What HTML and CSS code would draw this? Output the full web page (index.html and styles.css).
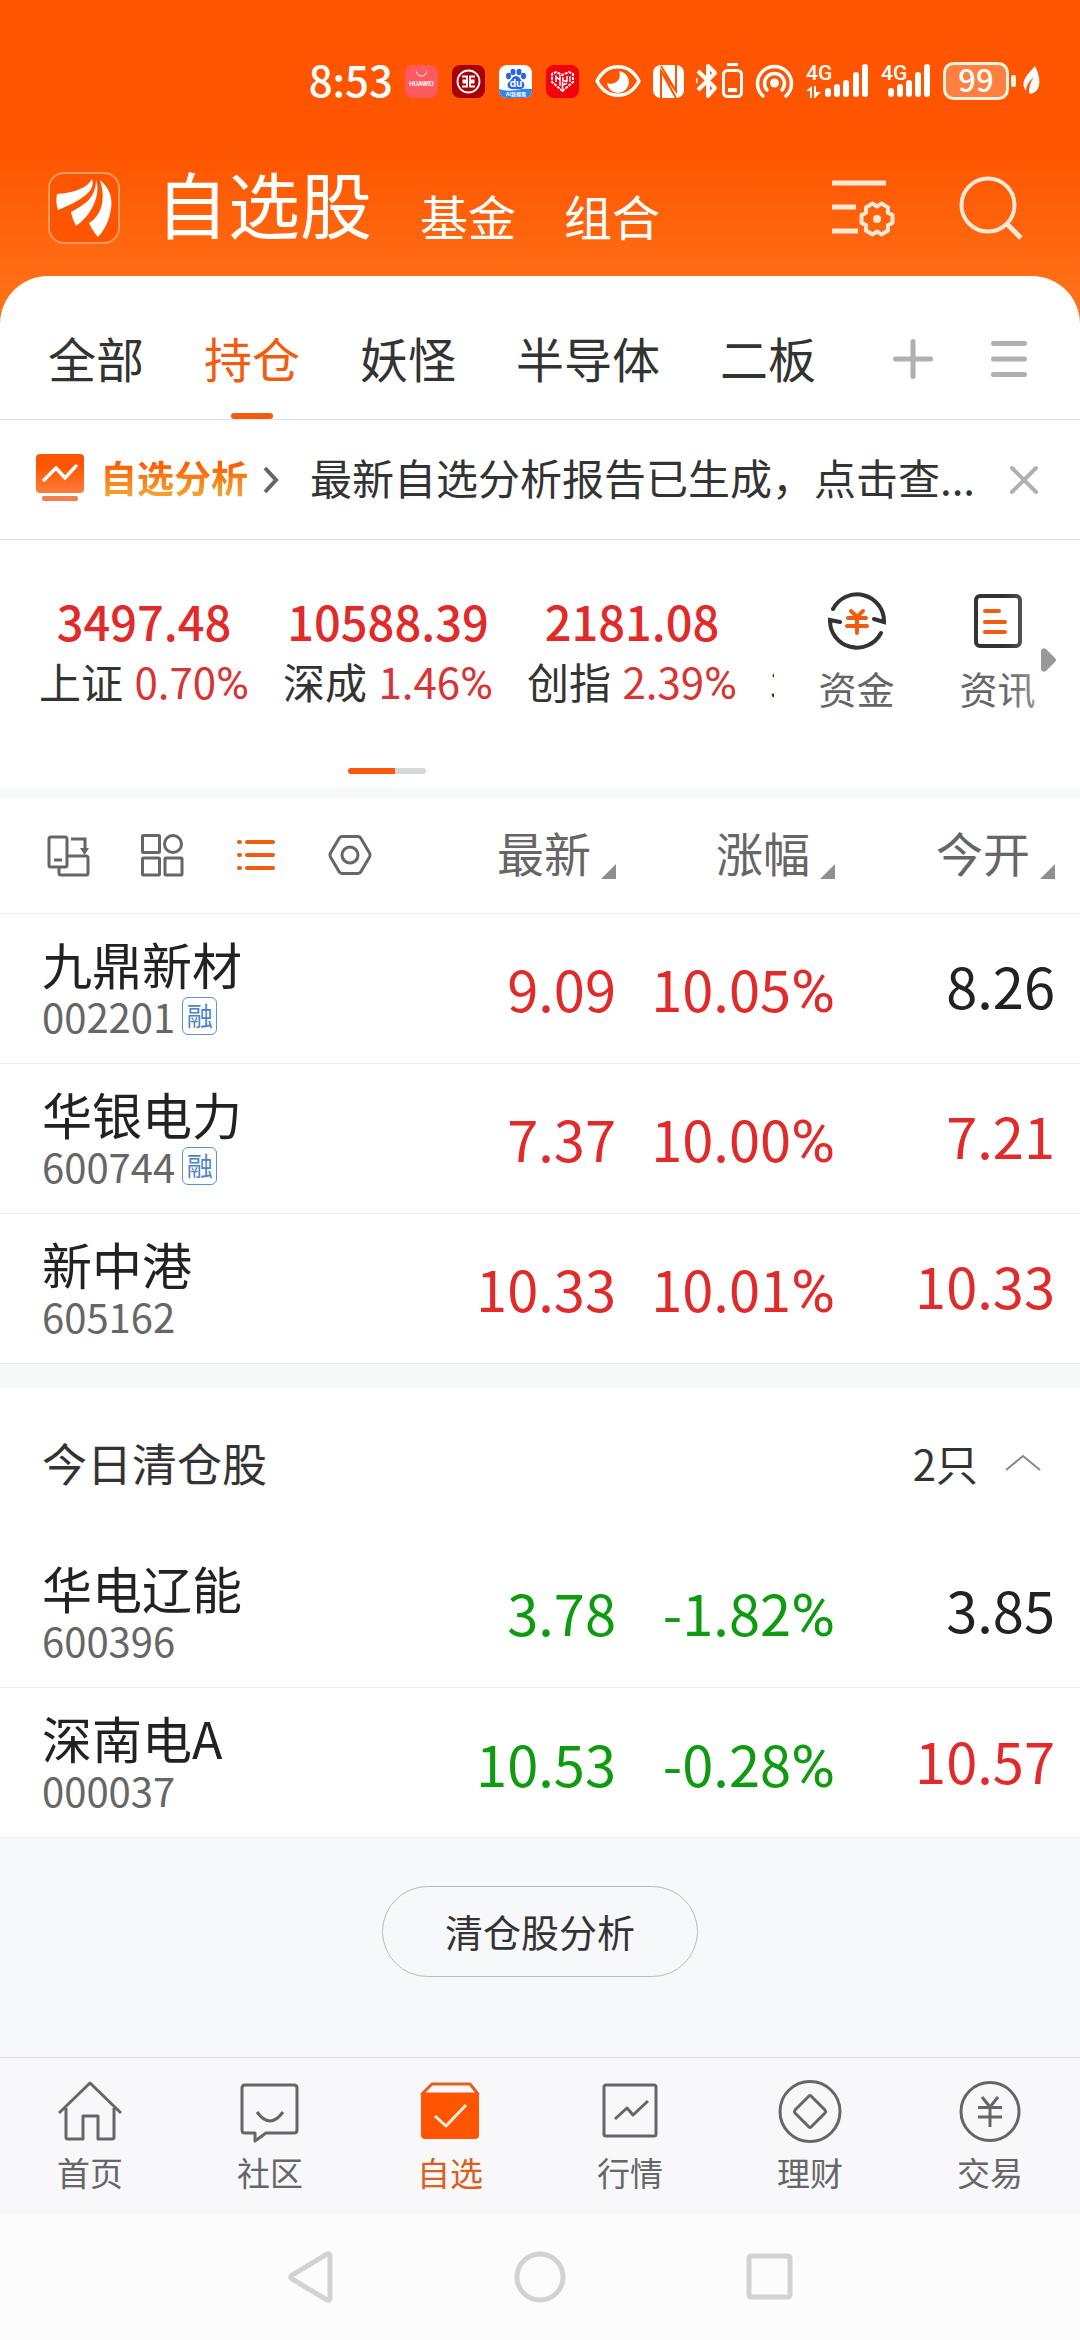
FILE: index.html
```html
<!DOCTYPE html>
<html lang="zh-CN">
<head>
<meta charset="utf-8">
<meta name="viewport" content="width=device-width">
<title>自选股</title>
<link rel="stylesheet" href="styles.css">
</head>
<body>
<div class="page">
  <div class="top">
    <div class="status">
      <span class="time">8:53</span>
      <div class="apps">
        <svg width="33" height="33" viewBox="0 0 33 33"><rect width="33" height="33" rx="8" fill="#ff5a5f"/><path d="M11.500 6.500a5 4.500 0 0 0 10 0" fill="none" stroke="#fff" stroke-width="1"/><text x="16.500" y="21" text-anchor="middle" class="t-huawei">HUAWEI</text></svg>
        <svg width="33" height="33" viewBox="0 0 33 33"><rect width="33" height="33" rx="8" fill="#a90008"/><g fill="none" stroke="#fff" stroke-width="1.800"><circle cx="16.500" cy="16.500" r="11"/><path d="M10 11.500h5v4h-4.500M10 21.500h5v-4h-4.500M23 11.500h-5v4h4.500M23 21.500h-5v-4h4.500"/></g></svg>
        <svg width="33" height="33" viewBox="0 0 33 33"><clipPath id="app-clip"><rect width="33" height="33" rx="8"/></clipPath><g clip-path="url(#app-clip)"><rect width="33" height="33" fill="#fff"/><path d="M0 24q8 3 17 1t16-1v9H0z" fill="#2f86f0"/><g fill="#2a62e8"><ellipse cx="9.500" cy="11" rx="2.500" ry="3.200"/><ellipse cx="14" cy="7" rx="2.500" ry="3.200"/><ellipse cx="20" cy="7" rx="2.500" ry="3.200"/><ellipse cx="24.500" cy="11" rx="2.500" ry="3.200"/><path d="M17 11c4 0 4 4 7 6 3 3 1 7-3 7h-8c-4 0-6-4-3-7 3-2 3-6 7-6z"/></g></g><text x="17" y="22" text-anchor="middle" class="t-du">du</text><text x="17" y="31" text-anchor="middle" class="t-ai">AI新搜索</text></svg>
        <svg width="33" height="33" viewBox="0 0 33 33"><rect width="33" height="33" rx="8" fill="#f5000c"/><path d="M16.500 26L6 17V9l4-2 6.500 3L23 7l4 2v8z" fill="none" stroke="#fff" stroke-width="2" stroke-dasharray="3 1"/><path d="M10 10v7M10 12l4 3M14 10v11M17 12v4h4v-5M24 11v6M17 20l4-2M16.500 17v7" fill="none" stroke="#fff" stroke-width="1.500"/></svg>
      </div>
      <svg width="46" height="38" viewBox="0 0 46 38"><path d="M2 19C12 0 34 0 44 19 34 38 12 38 2 19z" fill="none" stroke="#fff" stroke-width="3.500" stroke-linejoin="round"/><path d="M24 9a11 11 0 1 1-12 12c4 2 10 0 12-4 1-3 1-5 0-8z" fill="#fff"/></svg>
      <svg width="31" height="33" viewBox="0 0 31 33"><rect width="31" height="33" rx="8" fill="#fff"/><path d="M8 33V6l15 20V0M8 6l15 27M8 1l15 25" fill="none" stroke="#ff5500" stroke-width="2"/></svg>
      <svg width="47" height="36" viewBox="0 0 47 36"><g fill="none" stroke="#fff" stroke-linejoin="round"><path d="M2 8l17 17-7 8V3l7 7L2 27" stroke-width="4"/><path d="M0 15v5" stroke-width="3"/><rect x="27.500" y="7.500" width="18" height="26" rx="4" stroke-width="3"/></g><path d="M31 0h11v3H31zM32 25h9v4h-9z" fill="#fff"/></svg>
      <svg width="39" height="35" viewBox="0 0 39 35"><g fill="none" stroke="#fff" stroke-width="3.500" stroke-linecap="round"><path d="M8 32a17 17 0 1 1 23 0"/><path d="M12 26a10 10 0 1 1 15 0"/></g><circle cx="19.500" cy="19" r="4.500" fill="#fff"/></svg>
      <svg width="63" height="52" viewBox="0 -8 63 52"><text x="0" y="17" class="t-4g">4G</text><g stroke="#fff" stroke-width="6" stroke-linecap="round"><path d="M22 28v3M31 24v7M40 20v11M50 12v19M59 4v27"/></g><path d="M0 28l6-5v12H4v-7zM8 23h2v6h5l-6 6H8z" fill="#fff"/></svg>
      <svg width="50" height="52" viewBox="0 -8 50 52"><text x="0" y="17" class="t-4g">4G</text><g stroke="#fff" stroke-width="6" stroke-linecap="round"><path d="M10 28v3M19 24v7M28 20v11M37 12v19M46 4v27"/></g></svg>
      <svg width="97" height="58" viewBox="0 -10 97 58"><rect x="1.500" y="1.500" width="63" height="35" rx="9" fill="#ff8040" stroke="#fff3e0" stroke-width="3"/><rect x="68" y="13" width="5" height="12" rx="2" fill="#fff3e0"/><text x="33" y="30" text-anchor="middle" class="t-batt">99</text><path d="M92 4c5 10 8 24-4 28l-2-1c0-7 2-12 5-16-5 4-8 9-8 14-7-9 2-17 9-25z" fill="#fff"/></svg>
    </div>
    <header class="head">
      <svg class="logo" width="72" height="72" viewBox="0 0 72 72"><rect x="1" y="1" width="70" height="70" rx="15" fill="#ff5500" stroke="#ff9a60" stroke-width="2"/><path fill="#fff" d="M9 22C22 21 38 18 44 7c4 12-10 21-34 31C8 32 8 27 9 22zM48 8c6 18-8 38-20 46-2-4-4-9-5-14C36 33 48 26 48 8zM52 8c10 8 14 20 10 34-2 9-7 18-12 23-4-5-7-9-9-14 13-8 17-24 11-43z"/></svg>
      <h1>自选股</h1>
      <a class="sub" href="#fund">基金</a>
      <a class="sub" href="#group">组合</a>
      <div class="head-tools">
        <button type="button" aria-label="管理"><svg width="64" height="64" viewBox="0 0 64 64"><g fill="none" stroke="#ffe9d6" stroke-width="5"><path d="M0 7h54M0 31h24M0 55h26"/><path stroke-width="4" stroke-linejoin="round" d="M60.500 39v8l-4.700 2.300.3 5.200-6.700 3.900-4.400-2.900-4.400 2.900-6.700-3.900.3-5.200-4.700-2.400v-7.800l4.700-2.400-.3-5.200 6.700-3.900 4.400 2.900 4.400-2.900 6.700 3.900-.3 5.200z"/></g><circle cx="45" cy="43" r="4" fill="#ffe9d6"/></svg></button>
        <button type="button" aria-label="搜索"><svg width="64" height="64" viewBox="0 0 64 64"><g fill="none" stroke="#ffe9d6" stroke-width="4"><circle cx="29" cy="29" r="26.500"/><path d="M48 48l14 14" stroke-width="5"/></g></svg></button>
      </div>
    </header>
    <nav class="tabs">
      <a href="#all">全部</a>
      <a href="#hold" class="on" aria-current="page">持仓</a>
      <a href="#yao">妖怪</a>
      <a href="#semi">半导体</a>
      <a href="#second">二板</a>
      <div class="tab-tools">
        <button type="button" aria-label="添加分组"><svg width="40" height="40" viewBox="0 0 40 40"><path d="M20 2.500v35M2.500 20h35" stroke="#b0b0b0" stroke-width="5" stroke-linecap="round"/></svg></button>
        <button type="button" aria-label="分组菜单"><svg width="36" height="40" viewBox="0 0 36 40"><path d="M2.500 4.500h31M2.500 20h31M2.500 35.500h31" stroke="#b0b0b0" stroke-width="5" stroke-linecap="round"/></svg></button>
      </div>
    </nav>
  </div>

  <section class="banner">
    <svg width="48" height="48" viewBox="0 0 48 48"><defs><linearGradient id="report" x2="0" y2="1"><stop offset=".3" stop-color="#ff5500"/><stop offset="1" stop-color="#ff7d3c"/></linearGradient></defs><rect width="48" height="39" rx="4" fill="url(#report)"/><path d="M8 26l12-12 9 10 11-12" fill="none" stroke="#fff" stroke-width="3.500" stroke-linecap="round"/><rect x="6" y="42" width="36" height="5" rx="2" fill="#f08050"/></svg>
    <a class="banner-title" href="#report">自选分析</a>
    <svg class="chev" width="16" height="28" viewBox="0 0 16 28"><path d="M2 2l11 12L2 26" fill="none" stroke="#666" stroke-width="4"/></svg>
    <p>最新自选分析报告已生成，点击查...</p>
    <button type="button" aria-label="关闭"><svg width="30" height="30" viewBox="0 0 30 30"><path d="M3 3l24 24M27 3L3 27" stroke="#b0b0b0" stroke-width="4" stroke-linecap="round"/></svg></button>
  </section>

  <section class="market">
    <div class="indices">
      <div class="index-row">
        <div class="index"><b>3497.48</b><span>上证 <i>0.70<em>%</em></i></span></div>
        <div class="index"><b>10588.39</b><span>深成 <i>1.46<em>%</em></i></span></div>
        <div class="index"><b>2181.08</b><span>创指 <i>2.39<em>%</em></i></span></div>
        <div class="index next"><span>北证</span></div>
      </div>
      <div class="pager"></div>
    </div>
    <div class="tools">
      <a href="#money"><svg width="58" height="58" viewBox="0 0 58 58"><g fill="none" stroke="#333" stroke-width="4" stroke-linecap="round"><path d="M5 17A27 27 0 0 1 56 30l-10-3M53 41A27 27 0 0 1 2 28l10 2"/><path d="M23 19l6 6 6-6M20 26h18M19 34h20M29 26v15" stroke="#f25c10"/></g></svg><span>资金</span></a>
      <a href="#news"><svg width="48" height="58" viewBox="0 0 48 58"><rect x="2" y="4" width="44" height="50" rx="4" fill="none" stroke="#333" stroke-width="4"/><path d="M11 19h14M11 30h20M11 40h20" stroke="#f25c10" stroke-width="4" stroke-linecap="round"/></svg><span>资讯</span></a>
      <svg class="more" width="16" height="24" viewBox="0 0 16 24"><path d="M0 3q1-4 5-2l9 9q2 2 0 4l-9 9q-4 2-5-2z" fill="#999"/></svg>
    </div>
  </section>

  <table class="quotes holdings">
    <colgroup><col><col class="c-last"><col class="c-pct"><col class="c-open"></colgroup>
    <thead>
      <tr>
        <th>
          <div class="views">
            <button type="button" aria-label="横屏"><svg width="44" height="44" viewBox="0 0 44 44"><g fill="none" stroke="#666" stroke-width="3"><rect x="3" y="4" width="18" height="30" rx="2"/><path d="M8 27h8M13 35v5q0 2 2 2h25q2 0 2-2V25q0-2-2-2H22M25 6h14v11"/></g><path d="M34 15h9l-4.500 7z" fill="#666"/></svg></button>
            <button type="button" aria-label="宫格"><svg width="44" height="44" viewBox="0 0 44 44"><g fill="none" stroke="#666" stroke-width="3"><rect x="2.500" y="2.500" width="17" height="17" rx="1"/><circle cx="33" cy="11" r="8.500"/><rect x="2.500" y="25" width="17" height="17" rx="1"/><rect x="25" y="25" width="17" height="17" rx="1"/></g></svg></button>
            <button type="button" aria-label="列表"><svg width="44" height="44" viewBox="0 0 44 44"><path d="M13 9h26M13 22h26M13 35h26M5 9h1M5 22h1M5 35h1" stroke="#f25c10" stroke-width="4" stroke-linecap="round"/></svg></button>
            <button type="button" aria-label="设置"><svg width="44" height="44" viewBox="0 0 44 44"><g fill="none" stroke="#666" stroke-width="3"><path d="M14 3.500h16q2 0 3 2l8.500 14.500q1 2 0 4L33 38.500q-1 2-3 2H14q-2 0-3-2L2.500 24q-1-2 0-4L11 5.500q1-2 3-2z"/><circle cx="22" cy="22" r="8"/></g></svg></button>
          </div>
        </th>
        <th><button class="sort" type="button">最新</button></th>
        <th><button class="sort" type="button">涨幅</button></th>
        <th><button class="sort" type="button">今开</button></th>
      </tr>
    </thead>
    <tbody>
      <tr><td class="stock"><strong>九鼎新材</strong><span>002201<i class="tag">融</i></span></td><td class="up">9.09</td><td class="up">10.05<em>%</em></td><td class="open">8.26</td></tr>
      <tr><td class="stock"><strong>华银电力</strong><span>600744<i class="tag">融</i></span></td><td class="up">7.37</td><td class="up">10.00<em>%</em></td><td class="open up">7.21</td></tr>
      <tr><td class="stock"><strong>新中港</strong><span>605162</span></td><td class="up">10.33</td><td class="up">10.01<em>%</em></td><td class="open up">10.33</td></tr>
    </tbody>
  </table>

  <section class="cleared">
    <div class="cleared-head">
      <h2>今日清仓股</h2>
      <span>2只</span>
      <button type="button" aria-label="收起"><svg width="36" height="18" viewBox="0 0 36 18"><path d="M1 16L18 2l17 14" fill="none" stroke="#888" stroke-width="2"/></svg></button>
    </div>
    <table class="quotes">
      <colgroup><col><col class="c-last"><col class="c-pct"><col class="c-open"></colgroup>
      <tbody>
        <tr><td class="stock"><strong>华电辽能</strong><span>600396</span></td><td class="down">3.78</td><td class="down">-1.82<em>%</em></td><td class="open">3.85</td></tr>
        <tr><td class="stock"><strong>深南电A</strong><span>000037</span></td><td class="down">10.53</td><td class="down">-0.28<em>%</em></td><td class="open up">10.57</td></tr>
      </tbody>
    </table>
  </section>

  <div class="action"><button type="button">清仓股分析</button></div>

  <nav class="bottom">
    <a href="#home"><svg width="64" height="64" viewBox="0 0 64 64"><path d="M1 33L32 3l31 30M8 28v29q0 2 2 2h15V36h15v23h14q2 0 2-2V28"/></svg>首页</a>
    <a href="#bbs"><svg width="64" height="64" viewBox="0 0 64 64"><path d="M7 5h49q3 0 3 3v42q0 3-3 3H28l-11 8v-8H7q-3 0-3-3V8q0-3 3-3z"/><path d="M19 32q13 18 26 0"/></svg>社区</a>
    <a href="#self" class="on" aria-current="page"><svg width="64" height="64" viewBox="0 0 64 64"><path d="M14 4h38l8 10H4z"/><rect x="3" y="13" width="58" height="46" rx="4" class="fill"/><path d="M17 36l11 10 20-21" class="check"/></svg>自选</a>
    <a href="#quote"><svg width="64" height="64" viewBox="0 0 64 64"><rect x="6" y="5" width="52" height="51" rx="2"/><path d="M17 39l12-11 6 7 15-14"/></svg>行情</a>
    <a href="#wealth"><svg width="64" height="64" viewBox="0 0 64 64"><circle cx="32" cy="31.500" r="30"/><path d="M31 16q1-1 2 0l14 14q1 1.500 0 3L33 47q-1 1-2 0L17 33q-1-1.500 0-3z"/></svg>理财</a>
    <a href="#trade"><svg width="64" height="64" viewBox="0 0 64 64"><circle cx="32" cy="31.500" r="29"/><path d="M24 17l8 10 8-10M20 27.500h24M20 37h24M32 27v20"/></svg>交易</a>
  </nav>
  <div class="sysnav">
    <button type="button" aria-label="返回"><svg width="54" height="54" viewBox="0 0 54 54"><path d="M44 4q3-1 3 2v42q0 3-3 2L9 29q-3-2 0-4z"/></svg></button>
    <button type="button" aria-label="主页"><svg width="54" height="54" viewBox="0 0 54 54"><circle cx="27" cy="27" r="23"/></svg></button>
    <button type="button" aria-label="最近"><svg width="54" height="54" viewBox="0 0 54 54"><rect x="6" y="6" width="41" height="41" rx="2"/></svg></button>
  </div>
</div>
</body>
</html>
```

FILE: styles.css
```css
* { box-sizing: border-box; }

body {
  margin: 0;
  background: #f7f8fa;
  color: #333;
  font-family: "Noto Sans CJK SC", sans-serif;
}

a { color: inherit; text-decoration: none; }
i, em { font-style: normal; }
svg { display: block; flex: none; }
button {
  display: block;
  margin: 0;
  padding: 0;
  border: 0;
  background: none;
  color: inherit;
  font: inherit;
}
em { font-family: Roboto, sans-serif; line-height: 1; }

.page {
  display: flex;
  flex-direction: column;
  min-height: 100vh;
}

/* Orange header */
.top { background: linear-gradient(#ff5500 150px, #ff7118 300px); }

.status {
  display: flex;
  align-items: center;
  justify-content: flex-end;
  gap: 12px;
  height: 162px;
  padding-right: 40px;
  color: #fff;
}
.time { font-size: 42px; line-height: 56px; font-weight: 500; padding-bottom: 4px; }
.apps { display: flex; gap: 14px; padding-right: 4px; }
.t-huawei { font: 700 6px Inter, sans-serif; fill: #fff; }
.t-du { font: 700 10px Inter, sans-serif; fill: #fff; }
.t-ai { font: 700 5px "Noto Sans CJK SC", sans-serif; fill: #fff; }
.t-4g { font: 500 21px Roboto, sans-serif; fill: #fff; }
.t-batt { font: 500 31px "Noto Sans CJK SC", sans-serif; fill: #fff; }

.head {
  display: flex;
  align-items: flex-start;
  height: 114px;
  padding: 0 57px 0 48px;
  color: #fff;
}
.logo { margin-top: 10px; }
.head h1 { margin: 0 0 0 36px; font-size: 72px; line-height: 80px; font-weight: 400; }
.sub { margin: 23px 0 0 48px; font-size: 48px; line-height: 60px; }
.head-tools { display: flex; gap: 63px; margin-left: auto; padding-top: 14px; }

.tabs {
  display: flex;
  align-items: center;
  gap: 60px;
  height: 144px;
  padding: 0 53px 0 48px;
  border-bottom: 1px solid #e2e2e2;
  border-radius: 48px 48px 0 0;
  background: #fff;
  font-size: 48px;
  line-height: 60px;
}
.tabs a { position: relative; margin-top: 18px; }
.tabs .on { color: #f25c10; }
.tabs .on::after {
  content: "";
  position: absolute;
  left: 50%;
  bottom: -32px;
  width: 42px;
  height: 6px;
  margin-left: -21px;
  border-radius: 3px;
  background: #f25c10;
}
.tab-tools { display: flex; gap: 58px; margin: 22px 0 0 auto; }

/* Report banner */
.banner {
  display: flex;
  align-items: center;
  height: 120px;
  padding: 0 41px 0 36px;
  border-bottom: 1px solid #e2e2e2;
  background: #fff;
}
.banner > svg:first-child { margin-bottom: 4px; }
.banner-title {
  margin: 0 0 5px 16px;
  background: linear-gradient(#ff5a00 20%, #f5a02a 85%);
  background-clip: text;
  -webkit-background-clip: text;
  color: transparent;
  font-size: 37px;
  line-height: 48px;
  font-weight: 700;
}
.chev { margin-left: 15px; }
.banner p {
  flex: 1;
  margin: 0 0 6px 31px;
  overflow: hidden;
  white-space: nowrap;
  font-size: 42px;
  line-height: 56px;
}

/* Market indices */
.market {
  display: flex;
  height: 247px;
  background: #fff;
}
.indices { flex: 1; min-width: 0; overflow: hidden; }
.index-row { display: flex; height: 228px; padding: 51px 0 0 22px; }
.index {
  display: flex;
  flex: 0 0 244px;
  flex-direction: column;
  align-items: center;
  white-space: nowrap;
}
.index b { color: #e12a2a; font-size: 47px; line-height: 60px; font-weight: 500; }
.index span { font-size: 42px; line-height: 60px; }
.index i { margin-left: 2px; color: #d83434; }
.index em { font-size: 45px; }
.index.next {
  flex: 1 1 0;
  min-width: 0;
  overflow: hidden;
  align-items: flex-start;
  padding: 60px 0 0 16px;
}
.pager {
  width: 78px;
  height: 6px;
  margin: 0 auto;
  border-radius: 3px;
  background: linear-gradient(90deg, #f9590c 60%, #d4d7dc 60%);
}
.tools {
  position: relative;
  display: flex;
  width: 306px;
  padding: 52px 12px 0 12px;
}
.tools a {
  display: flex;
  flex: 1;
  flex-direction: column;
  align-items: center;
  gap: 12px;
  color: #666;
  font-size: 38px;
  line-height: 52px;
}
.tools::after {
  content: "";
  position: absolute;
  top: 0;
  right: 0;
  width: 75px;
  height: 180px;
  background: linear-gradient(90deg, rgba(255, 255, 255, 0), rgba(255, 255, 255, .7));
}
.more { position: absolute; z-index: 1; top: 108px; right: 23px; }

/* Quote tables */
.quotes {
  width: 100%;
  border-collapse: collapse;
  table-layout: fixed;
  background: #fff;
  color: #222;
}
.holdings { margin-top: 11px; }
.c-last { width: 220px; }
.c-pct { width: 219px; }
.c-open { width: 245px; }
.quotes th { height: 115px; padding: 0; border-bottom: 1px solid #ececec; font-weight: 400; }
.quotes td {
  height: 150px;
  padding: 0;
  border-bottom: 1px solid #ececec;
  text-align: right;
  font-size: 56px;
  line-height: 72px;
}
.quotes td em { font-size: 60px; }
.quotes th:last-child, .quotes td:last-child { padding-right: 25px; }
.views { display: flex; gap: 50px; padding-left: 46px; }
.sort {
  display: flex;
  align-items: flex-end;
  gap: 10px;
  margin-left: auto;
  padding-bottom: 6px;
  color: #666;
  font-size: 47px;
  line-height: 54px;
}
.sort::after {
  content: "";
  border-left: 15px solid transparent;
  border-bottom: 15px solid #8e8e93;
}
.quotes .stock { padding: 0 0 5px 42px; text-align: left; }
.stock strong { display: block; font-size: 50px; line-height: 60px; font-weight: 400; }
.stock span {
  display: flex;
  align-items: center;
  gap: 7px;
  color: #666;
  font-size: 40px;
  line-height: 46px;
}
.tag {
  width: 35px;
  height: 38px;
  border: 1px solid #5b93cc;
  border-radius: 6px;
  color: #4a86c5;
  text-align: center;
  font-size: 26px;
  line-height: 34px;
}
.quotes .open { padding-bottom: 6px; }
.up { color: #e12a2a; }
.down { color: #0f9b0f; }

.cleared { margin-top: 24px; background: #fff; }
.cleared-head {
  display: flex;
  align-items: center;
  height: 150px;
  padding: 0 39px 0 42px;
  font-size: 42px;
  line-height: 56px;
}
.cleared-head h2 { margin: 0 auto 0 0; font-size: 45px; font-weight: 400; }
.cleared-head button { margin-left: 27px; }

.action { padding: 48px 0 80px; }
.action button {
  width: 316px;
  height: 91px;
  margin: 0 auto;
  padding-bottom: 2px;
  border: 1px solid #bbb;
  border-radius: 46px;
  font-size: 38px;
  line-height: 52px;
}

/* Bottom navigation */
.bottom {
  display: flex;
  height: 157px;
  margin-top: auto;
  padding-top: 22px;
  border-top: 1px solid #e0e0e3;
  background: #f8f8fa;
}
.bottom a {
  display: flex;
  flex: 1;
  flex-direction: column;
  align-items: center;
  gap: 6px;
  color: #666;
  font-size: 33px;
  line-height: 44px;
}
.bottom svg { fill: none; stroke: #666; stroke-width: 3; stroke-linejoin: round; }
.bottom .on { color: #d9601f; }
.bottom .on svg { stroke: #e0601c; }
.bottom .fill { fill: #ff5500; stroke: none; }
.bottom .check { stroke: #fff0dc; }

.sysnav {
  display: flex;
  justify-content: center;
  gap: 176px;
  height: 126px;
  align-items: center;
  background: #fcfcfc;
}
.sysnav svg { fill: none; stroke: #d2d2d2; stroke-width: 5; }
```
